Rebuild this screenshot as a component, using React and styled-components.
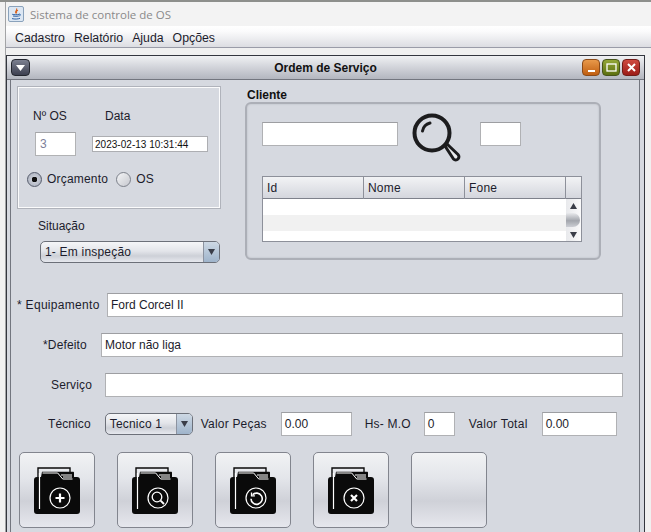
import React from 'react';
import styled, { createGlobalStyle } from 'styled-components';

const Global = createGlobalStyle`
  html, body { margin: 0; padding: 0; width: 651px; height: 532px; overflow: hidden; background: #f0f0f0; }
  * { box-sizing: border-box; }
  body { font-family: "Liberation Sans", Arial, sans-serif; font-size: 12px; color: #1c1c2c; }
`;

const Page = styled.div`
  width: 651px; height: 532px; overflow: hidden;
  background: #f1f1f1; padding-left: 5px;
  display: flex; flex-direction: column;
  border-top: 2px solid #8d8f8c;
`;
const Window = styled.div`
  flex: 1; min-height: 0; display: flex; flex-direction: column; border-left: 1px solid #a3a4a6;
`;
const TitleBar = styled.div`
  height: 24px; display: flex; align-items: center; gap: 6px; padding-left: 2px;
  background: #f3f3f3; color: #8a8a8a; font-family: "Open Sans", sans-serif; font-size: 11.5px;
  flex: none;
`;
const MenuBar = styled.div`
  height: 22px; flex: none; display: flex; align-items: center; gap: 9px; padding: 2px 0 0 9px;
  background: linear-gradient(#ffffff 0%, #fbfbfc 25%, #dcdde2 100%);
  border-bottom: 1px solid #9a9ca8;
  font-size: 12.3px; color: #1c1c2c;
`;
const Desktop = styled.div`
  flex: 1; padding-top: 7px; background: #f0f0f0; min-height: 0;
`;
const Frame = styled.div`
  height: 100%; border: 1px solid #33363e; border-bottom: none; background: #d6d9e0;
  display: flex; flex-direction: column; width: 639px;
`;
const FrameTitle = styled.div`
  height: 24px; flex: none; display: flex; align-items: center; justify-content: space-between;
  padding: 0 4px; position: relative;
  background: linear-gradient(#f0f1f3 0%, #dadce1 35%, #b3b6bf 100%);
  border-bottom: 1px solid #73767f;
`;
const FrameHeading = styled.div`
  position: absolute; left: 0; right: 0; text-align: center; font-weight: bold; font-size: 12px; color: #111;
`;
const MenuBtn = styled.div`
  width: 19px; height: 17px; border-radius: 4px; border: 1px solid #23262e;
  background: linear-gradient(#7c8090, #3d4050); display: flex; align-items: center; justify-content: center;
`;
const Ctrls = styled.div` display: flex; gap: 2px; `;
const Ctrl = styled.div`
  width: 18px; height: 17px; border-radius: 4px; border: 1px solid ${p => p.$b};
  background: linear-gradient(${p => p.$a}, ${p => p.$c}); display: flex; align-items: center; justify-content: center;
`;
const Body = styled.div`
  flex: 1; margin: 0 4px 0 3px; padding: 6px 0 0 6px; border-left: 1px solid #73767f; border-right: 1px solid #73767f;
  display: flex; flex-direction: column; min-height: 0;
`;
const Top = styled.div` display: flex; height: 201px; flex: none; `;
const LeftCol = styled.div` width: 228px; flex: none; `;
const Etched = styled.div`
  width: 204px; height: 123px; padding: 22px 0 0 15px; border: 1px solid #b0b3bb; box-shadow: inset 0 0 0 1px #fbfbfc;
  display: grid; grid-template-columns: 59px auto; grid-template-rows: 16px 32px auto; align-content: start;
`;
const Small = styled.div` font-size: 12px; color: ${p => p.$c || '#1c1c2c'}; `;
const DataLabel = styled(Small)` padding-left: 13px; `;
const NumBox = styled.div`
  width: 41px; height: 24px; margin-left: 2px; margin-top: 7px; background: #fff;
  border: 1px solid #b1b2b4; border-top-color: #a4a5a8; display: flex; align-items: center; padding-left: 4px;
  color: #7d7f9a; font-size: 12px;
`;
const DateBox = styled.div`
  width: 116px; height: 16px; margin-top: 11px; background: #fff; border: 1px solid #adaeb2; display: flex; align-items: center;
  padding-left: 2px; font-size: 10px; letter-spacing: .03px; color: #111;
`;
const Radios = styled.div`
  grid-column: 1 / 3; display: flex; align-items: center; margin-top: 14px; margin-left: -6px; height: 16px;
`;
const Radio = styled.div`
  width: 15px; height: 15px; border-radius: 50%; border: 1px solid ${p => p.$on ? '#565c6c' : '#7c808a'};
  background: ${p => p.$on ? 'radial-gradient(circle, #111 0 2.6px, #c6cad4 3px, #a6acba 100%)' : 'linear-gradient(135deg,#f4f5f7,#c6c8ce)'};
  flex: none;
`;
const RadioLabel = styled.span` margin: 0 8px 0 5px; font-size: 12px; letter-spacing: .2px; `;
const SitLabel = styled(Small)` margin: 10px 0 0 21px; line-height: 14px; `;
const Combo = styled.div`
  width: ${p => p.$w}px; height: 22px; margin-left: ${p => p.$ml || 0}px; margin-top: ${p => p.$mt || 0}px;
  border: 1px solid #6c7079; border-radius: 5px;
  background: linear-gradient(#f5f6f8 0%, #e3e5ea 45%, #cdd0d7 70%, #e6e8ee 100%);
  display: flex; align-items: center; justify-content: space-between; padding-left: 4px; flex: none;
  font-size: 12px; letter-spacing: .2px; overflow: hidden;
`;
const ComboArrow = styled.div`
  width: 16px; align-self: stretch; display: flex; align-items: center; justify-content: center;
  background: linear-gradient(#cdd8e4, #9fb4cb); border-left: 1px solid #8c93a0;
`;
const RightCol = styled.div` flex: none; width: 356px; `;
const ClientLabel = styled.div` font-weight: bold; font-size: 12px; color: #111; line-height: 14px; padding: 2px 0 0 2px; height: 16px; `;
const Client = styled.div`
  height: 158px; border: 2px solid #acafb7; border-radius: 6px; padding: 18px 15px 0 15px;
  box-shadow: inset 0 0 2px #b4b7bf;
`;
const SearchRow = styled.div` display: flex; height: 24px; align-items: center; `;
const Field = styled.div`
  width: ${p => p.$w ? p.$w + 'px' : 'auto'}; flex: ${p => p.$w ? 'none' : '1'}; height: ${p => p.$h || 24}px;
  background: #fff; border: 1px solid #b0b1b4; border-top: 1px solid #9d9ea2; display: flex; align-items: center; padding-left: 3px;
  font-size: 12px; color: #1c1c2c;
`;
const Lens = styled.div` width: 82px; flex: none; height: 24px; position: relative; `;
const LensIcon = styled.svg` position: absolute; left: 14px; top: -9px; `;
const Table = styled.div`
  margin-top: 30px; border: 1px solid #8d909a; width: 320px; height: 66px; display: flex; flex-direction: column; overflow: hidden;
`;
const THead = styled.div`
  height: 22px; flex: none; display: grid; grid-template-columns: 101px 101px 101px 1fr;
  background: linear-gradient(#f2f3f5, #d4d6dd); border-bottom: 1px solid #7e818b;
`;
const TH = styled.div`
  border-right: 1px solid #8d909a; padding-left: 4px; font-size: 12px; letter-spacing: .2px; line-height: 22px;
  &:last-child { border-right: none; }
`;
const TBody = styled.div` flex: 1; display: flex; min-height: 0; `;
const Rows = styled.div` flex: 1; display: flex; flex-direction: column; overflow: hidden; `;
const TRow = styled.div` height: 16px; background: ${p => p.$alt ? '#f1f1f1' : '#fff'}; flex: none; `;
const Scroll = styled.div`
  width: 15px; flex: none; background: linear-gradient(90deg, #e8e9ec, #fafafb); display: flex; flex-direction: column; align-items: center;
  justify-content: space-between; position: relative; padding: 4px 0 3px;
`;
const Thumb = styled.div`
  position: absolute; left: 0; top: 14px; width: 14px; height: 14px; border-radius: 0 7px 7px 0;
  background: linear-gradient(#e8e9ec, #a3a6ad 55%, #ccced4);
`;
const Rows2 = styled.div` display: flex; flex-direction: column; gap: 16px; margin-top: 6px; `;
const FormRow = styled.div` display: flex; align-items: center; height: 24px; padding-right: 12px; width: 618px; `;
const RowLabel = styled.div` flex: none; width: ${p => p.$w}px; padding-left: ${p => p.$pl}px; font-size: 12px; letter-spacing: ${p => p.$ls || 0.15}px; `;
const BottomRow = styled.div` display: flex; align-items: center; height: 24px; margin-top: -1px; `;
const InlineLabel = styled.div` flex: none; font-size: 12px; margin-left: ${p => p.$ml}px; margin-right: ${p => p.$mr}px; letter-spacing: ${p => p.$ls || 0}px; `;
const Actions = styled.div` display: flex; gap: 22px; margin: 16px 0 0 2px; `;
const Action = styled.div`
  width: 76px; height: 76px; border: 1px solid #82858e; border-radius: 5px; display: flex; align-items: center; justify-content: center;
  background: linear-gradient(#f1f2f4 0%, #e3e5ea 35%, #cfd1d8 65%, #e6e7ed 100%, #eff0f5);
  flex: none;
`;

const Arrow = ({ up }) => (
  <svg width="7" height="6" viewBox="0 0 7 6"><path d={up ? 'M3.5 0 7 6H0z' : 'M0 0h7L3.5 6z'} fill="#3a3d48" /></svg>
);

const JavaIcon = () => (
  <svg width="16" height="16" viewBox="0 0 16 16">
    <rect x=".5" y=".5" width="15" height="15" rx="1.5" fill="#dce7f3" stroke="#8aa2bb" />
    <path d="M8.5 2.5c1.5 1.6-2.3 2.5-.6 4.8M10 4.3c-1.8.8-2.2 1.7-1.2 3" fill="none" stroke="#d9611c" strokeWidth="1.1" />
    <path d="M4.2 8.3c2 .6 5.2.5 7 0M5 10c1.6.4 4.2.4 5.8 0M4 12.6c2.6.7 6 .6 8-.3M11 8.2c1.6-.5 2 1.1.3 1.8" fill="none" stroke="#2f62a6" strokeWidth="1" />
  </svg>
);

const Folder = ({ glyph }) => (
  <svg width="46" height="47" viewBox="0 0 46 47">
    <path d="M4 13V1h32v4" fill="none" stroke="#0a0a0a" strokeWidth="1.4" />
    <path d="M0 13a3 3 0 0 1 3-3h4l1-5.3h31c.7 0 1 .4 1 1V10h3a3 3 0 0 1 3 3v31a3 3 0 0 1-3 3H3a3 3 0 0 1-3-3z" fill="#0a0a0a" />
    <path d="M8.5 6h15.2l5 6h9.8" fill="none" stroke="#fff" strokeWidth="1" />
    <path d="M27 8h11M29 10h9" stroke="#fff" strokeWidth="1" />
    <path d="M5.5 6v36" stroke="#fff" strokeWidth="1.2" fill="none" />
    <circle cx="26" cy="31" r="10" fill="none" stroke="#fff" strokeWidth="1.2" />
    {glyph === 'add' && <path d="M26 26.5v9M21.5 31h9" stroke="#fff" strokeWidth="2.2" />}
    {glyph === 'search' && <g fill="none" stroke="#fff" strokeWidth="1.3"><circle cx="25" cy="30" r="4.8" /><path d="m28.6 33.6 3.4 3.4" strokeWidth="2" /></g>}
    {glyph === 'undo' && <g fill="none" stroke="#fff" strokeWidth="1.6"><path d="M22.6 27.8a5.6 5.6 0 1 1-1.6 4" /><path d="M21.5 25.5v3.4h3.4" strokeWidth="1.3" /></g>}
    {glyph === 'close' && <path d="m23 28 6 6M29 28l-6 6" stroke="#fff" strokeWidth="2.2" />}
  </svg>
);

export default function App() {
  return (
    <Page>
      <Global />
      <Window>
        <TitleBar><JavaIcon />Sistema de controle de OS</TitleBar>
        <MenuBar>
          <span>Cadastro</span><span>Relatório</span><span>Ajuda</span><span>Opções</span>
        </MenuBar>
        <Desktop>
          <Frame>
            <FrameTitle>
              <FrameHeading>Ordem de Serviço</FrameHeading>
              <MenuBtn><svg width="9" height="6" viewBox="0 0 9 6"><path d="M0 0h9L4.5 6z" fill="#fff" /></svg></MenuBtn>
              <Ctrls>
                <Ctrl $a="#e8994a" $c="#c05e10" $b="#8a4a18"><svg width="9" height="9" viewBox="0 0 9 9"><path d="M1 8h7" stroke="#fff" strokeWidth="2" /></svg></Ctrl>
                <Ctrl $a="#93a638" $c="#5c7010" $b="#46541a"><svg width="11" height="9" viewBox="0 0 11 9"><rect x="1" y="1" width="9" height="7" fill="none" stroke="#fff" strokeWidth="1.3" /></svg></Ctrl>
                <Ctrl $a="#cf4a40" $c="#9c1c18" $b="#701c18"><svg width="9" height="9" viewBox="0 0 9 9"><path d="m1 1 7 7M8 1 1 8" stroke="#fff" strokeWidth="2" /></svg></Ctrl>
              </Ctrls>
            </FrameTitle>
            <Body>
              <Top>
                <LeftCol>
                  <Etched>
                    <Small>Nº OS</Small>
                    <DataLabel>Data</DataLabel>
                    <NumBox>3</NumBox>
                    <DateBox>2023-02-13 10:31:44</DateBox>
                    <Radios>
                      <Radio $on /><RadioLabel>Orçamento</RadioLabel>
                      <Radio /><RadioLabel>OS</RadioLabel>
                    </Radios>
                  </Etched>
                  <SitLabel>Situação</SitLabel>
                  <Combo $w={180} $ml={23} $mt={8}>1- Em inspeção<ComboArrow><Arrow /></ComboArrow></Combo>
                </LeftCol>
                <RightCol>
                  <ClientLabel>Cliente</ClientLabel>
                  <Client>
                    <SearchRow>
                      <Field $w={136} />
                      <Lens>
                        <LensIcon width="50" height="50" viewBox="0 0 50 50">
                          <circle cx="20" cy="20" r="17.5" fill="none" stroke="#1c1c1e" strokeWidth="4" />
                          <path d="M10.5 18c.8-4 3.5-7 7.5-8" fill="none" stroke="#1c1c1e" strokeWidth="3" strokeLinecap="round" />
                          <path d="m33 33 2-2 11 10.5a2.8 2.8 0 0 1-4.5 4.5z" fill="#e9ebee" stroke="#1c1c1e" strokeWidth="3" strokeLinejoin="round" />
                        </LensIcon>
                      </Lens>
                      <Field $w={41} />
                    </SearchRow>
                    <Table>
                      <THead><TH>Id</TH><TH>Nome</TH><TH>Fone</TH><TH /></THead>
                      <TBody>
                        <Rows><TRow /><TRow $alt /><TRow /></Rows>
                        <Scroll><Arrow up /><Thumb /><Arrow /></Scroll>
                      </TBody>
                    </Table>
                  </Client>
                </RightCol>
              </Top>
              <Rows2>
                <FormRow><RowLabel $w={90} $pl={0} $ls={.3}>* Equipamento</RowLabel><Field>Ford Corcel II</Field></FormRow>
                <FormRow><RowLabel $w={84} $pl={26}>*Defeito</RowLabel><Field>Motor não liga</Field></FormRow>
                <FormRow><RowLabel $w={88} $pl={34}>Serviço</RowLabel><Field /></FormRow>
                <BottomRow>
                  <InlineLabel $ml={31} $mr={14} $ls={.1}>Técnico</InlineLabel>
                  <Combo $w={88}>Tecnico 1<ComboArrow><Arrow /></ComboArrow></Combo>
                  <InlineLabel $ml={8} $mr={14} $ls={.2}>Valor Peças</InlineLabel>
                  <Field $w={71}>0.00</Field>
                  <InlineLabel $ml={13} $mr={13} $ls={.2}>Hs- M.O</InlineLabel>
                  <Field $w={31}>0</Field>
                  <InlineLabel $ml={14} $mr={14} $ls={.3}>Valor Total</InlineLabel>
                  <Field $w={75}>0.00</Field>
                </BottomRow>
              </Rows2>
              <Actions>
                <Action><Folder glyph="add" /></Action>
                <Action><Folder glyph="search" /></Action>
                <Action><Folder glyph="undo" /></Action>
                <Action><Folder glyph="close" /></Action>
                <Action />
              </Actions>
            </Body>
          </Frame>
        </Desktop>
      </Window>
    </Page>
  );
}
